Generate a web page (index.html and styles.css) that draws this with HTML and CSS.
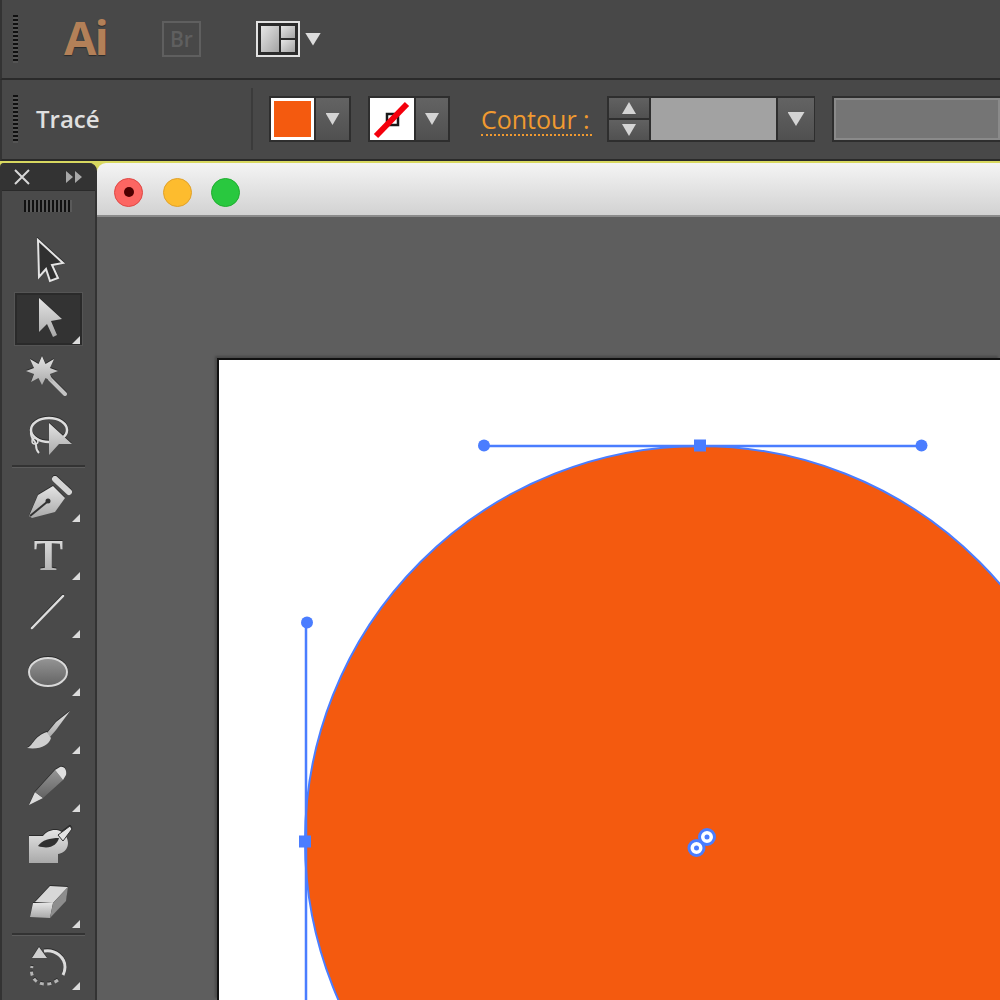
FILE: index.html
```html
<!DOCTYPE html>
<html lang="fr">
<head>
<meta charset="utf-8">
<title>Illustrator</title>
<link rel="stylesheet" href="styles.css">
</head>
<body>
<svg class="defs" width="0" height="0" aria-hidden="true">
  <defs>
    <linearGradient id="lg" x1="0" y1="0" x2="0" y2="1"><stop offset="0" stop-color="#e4e4e4"/><stop offset="1" stop-color="#a9a9a9"/></linearGradient>
    <linearGradient id="gray" x1="0" y1="0" x2="0" y2="1"><stop offset="0" stop-color="#959595"/><stop offset="1" stop-color="#636363"/></linearGradient>
    <linearGradient id="layout" x1="0" y1="0" x2="1" y2="1"><stop offset="0" stop-color="#e6e6e6"/><stop offset="1" stop-color="#a4a4a4"/></linearGradient>
  </defs>
</svg>
<div class="app">
  <header class="appbar">
    <span class="grip"></span>
    <span class="ai">Ai</span>
    <span class="br">Br</span>
    <svg class="layout-icon" width="44" height="36" viewBox="0 0 44 36">
      <rect x="1" y="1" width="42" height="34" fill="#2b2b2b" stroke="#e2e2e2" stroke-width="2"/>
      <rect x="5" y="5" width="18" height="26" fill="url(#layout)"/>
      <rect x="25" y="5" width="14" height="12" fill="url(#layout)"/>
      <rect x="25" y="19" width="14" height="12" fill="url(#layout)"/>
    </svg>
    <span class="tri tri-layout"></span>
  </header>
  <div class="optbar">
    <span class="grip"></span>
    <span class="trace">Tracé</span>
    <span class="vsep"></span>
    <div class="ctl ctl-fill">
      <span class="swatch swatch-orange"></span>
      <span class="btn"><span class="tri"></span></span>
    </div>
    <div class="ctl ctl-stroke">
      <svg class="swatch-none" width="44" height="42" viewBox="0 0 44 42">
        <rect width="44" height="42" fill="#fff"/>
        <rect x="17" y="16" width="11" height="11" fill="none" stroke="#1a1a1a" stroke-width="2.5"/>
        <path d="M6 38 L37 6" stroke="#f4000c" stroke-width="6"/>
      </svg>
      <span class="btn"><span class="tri"></span></span>
    </div>
    <span class="contour">Contour :</span>
    <div class="ctl ctl-weight">
      <div class="stepper">
        <span class="step"><span class="tri tri-up"></span></span>
        <span class="step"><span class="tri"></span></span>
      </div>
      <span class="field"></span>
      <span class="btn btn-wide"><span class="tri tri-big"></span></span>
    </div>
    <span class="field-long"></span>
  </div>
  <div class="stage">
    <aside class="tools">
      <div class="tools-head">
        <svg width="18" height="16" viewBox="0 0 18 16"><path d="M2 1 L16 15 M16 1 L2 15" stroke="#d8d8d8" stroke-width="2"/></svg>
        <svg width="18" height="14" viewBox="0 0 18 14"><path d="M1 1 L8 7 L1 13Z M10 1 L17 7 L10 13Z" fill="#a8a8a8"/></svg>
      </div>
      <div class="tools-grip"></div>

      <div class="tool"><svg class="ico" viewBox="15 235 67 52"><path d="M38 240 L63 263 L52 265 L58 278 L50 281 L46 269 L39 277Z" fill="#303030" stroke="#e4e4e4" stroke-width="2"/></svg></div>
      <div class="tool tool-active corner"><svg class="ico" viewBox="15 293 67 52"><path d="M39 298 L62 319 L51 321 L57 335 L53 337 L47 324 L39 332Z" fill="url(#lg)"/></svg></div>
      <div class="tool"><svg class="ico" viewBox="15 351 67 52">
        <path d="M50 379 L65 394" stroke="#c4c4c4" stroke-width="4" stroke-linecap="round"/>
        <path d="M42 356 L45.500 364 L54 359 L50 368 L58 371 L50 374 L53 382 L45.500 378 L42 385 L38.500 378 L31 382 L34 374 L26 371 L34 368 L30 359 L38.500 364Z" fill="url(#lg)"/>
      </svg></div>
      <div class="tool"><svg class="ico" viewBox="15 409 67 52">
        <ellipse cx="49" cy="430" rx="18" ry="12" fill="none" stroke="#ddd" stroke-width="2.500"/>
        <path d="M31 431 C30 440 36 440 36 445 C36 449 38 452 39 453" fill="none" stroke="#ddd" stroke-width="2"/>
        <circle cx="35" cy="441" r="3" fill="none" stroke="#ddd" stroke-width="1.500"/>
        <path d="M49 423 L72 444 L59 444 L49 455Z" fill="url(#lg)"/>
      </svg></div>
      <div class="tool-sep"></div>
      <div class="tool corner"><svg class="ico" viewBox="15 471 67 52">
        <path d="M55 479 L69 492" stroke="#d5d5d5" stroke-width="6" stroke-linecap="round"/>
        <path d="M29 516 L38 495 L53 486 L65 498 L55 512 L32 518Z" fill="url(#lg)"/>
        <path d="M30 516 L47 502" stroke="#333" stroke-width="2"/><circle cx="48" cy="501" r="2.500" fill="#333"/>
      </svg></div>
      <div class="tool corner"><svg class="ico" viewBox="15 529 67 52"><text class="tool-t" x="48.500" y="570" text-anchor="middle">T</text></svg></div>
      <div class="tool corner"><svg class="ico" viewBox="15 587 67 52"><path d="M63 596 L32 628" stroke="#dedede" stroke-width="2.500" stroke-linecap="round"/></svg></div>
      <div class="tool corner"><svg class="ico" viewBox="15 645 67 52"><ellipse cx="48" cy="672" rx="19" ry="14" fill="url(#gray)" stroke="#d8d8d8" stroke-width="2"/></svg></div>
      <div class="tool corner"><svg class="ico" viewBox="15 703 67 52">
        <path d="M70 711 L56 722 L47 733 L50 737 L56 730Z" fill="url(#lg)"/>
        <path d="M47 732 L51 738 C49 745 40 750 27 748 C33 746 34 736 47 732Z" fill="#cfcfcf"/>
      </svg></div>
      <div class="tool corner"><svg class="ico" viewBox="15 761 67 52">
        <path d="M29 805 L35 792 L43 798Z" fill="#dcdcdc"/>
        <path d="M35 792 L55 770 L63 780 L43 798Z" fill="url(#gray)"/>
        <path d="M55 770 L60 767 C65 766 67 771 66 775 L63 780Z" fill="#dedede"/>
      </svg></div>
      <div class="tool"><svg class="ico" viewBox="15 819 67 52">
        <path d="M29 836 L43 836 C48 829 60 827 66 836 C71 845 66 853 58 854 L58 863 L29 863Z" fill="url(#lg)"/>
        <path d="M38 846 C42 840 50 838 59 838 C57 845 50 850 38 846Z" fill="#2f2f2f"/>
        <path d="M58 835 L70 826 L72 829 L63 841Z" fill="#e2e2e2" stroke="#2f2f2f"/>
      </svg></div>
      <div class="tool corner"><svg class="ico" viewBox="15 877 67 52">
        <path d="M35 902 L50 886 L68 887 L53 903Z" fill="#d8d8d8"/>
        <path d="M33 903 L53 903 L50 918 L30 917Z" fill="url(#lg)"/>
        <path d="M53 903 L68 887 L66 901 L50 918Z" fill="#8d8d8d"/>
      </svg></div>
      <div class="tool-sep"></div>
      <div class="tool corner"><svg class="ico" viewBox="15 939 67 52">
        <path d="M44 951 C56 949 65 958 65 967 C65 971 64 973 63 975" fill="none" stroke="#dcdcdc" stroke-width="3"/>
        <path d="M58 980 C50 986 40 985 35 980 C31 976 31 970 32 966" fill="none" stroke="#b5b5b5" stroke-width="3" stroke-dasharray="4 3.500"/>
        <path d="M39 947 L47 958 L32 958Z" fill="#d0d0d0"/>
      </svg></div>
    </aside>
    <main class="doc">
      <div class="titlebar">
        <span class="light light-red"><span class="light-dot"></span></span>
        <span class="light light-yellow"></span>
        <span class="light light-green"></span>
      </div>
      <div class="canvas">
        <div class="artboard">
          <svg class="art" width="781" height="640" viewBox="219 360 781 640">
            <circle cx="700" cy="841" r="395" fill="#f45a0f" stroke="#4a7dff" stroke-width="2"/>
            <path d="M484 446 H921 M306 622 V1000" stroke="#4a7dff" stroke-width="2.500" fill="none"/>
            <circle cx="484" cy="445.500" r="6" fill="#4a7dff"/>
            <circle cx="921.500" cy="445.500" r="6" fill="#4a7dff"/>
            <circle cx="307" cy="622.500" r="6" fill="#4a7dff"/>
            <rect x="694" y="439.500" width="12" height="12" fill="#4a7dff"/>
            <rect x="299" y="835.500" width="12" height="12" fill="#4a7dff"/>
            <circle cx="707" cy="837" r="7.500" fill="#fff" stroke="#4a7dff" stroke-width="3"/>
            <circle cx="707" cy="837" r="2.500" fill="#4a7dff"/>
            <circle cx="696.500" cy="848" r="7.500" fill="#fff" stroke="#4a7dff" stroke-width="3"/>
            <circle cx="696.500" cy="848" r="2.500" fill="#4a7dff"/>
          </svg>
        </div>
      </div>
    </main>
  </div>
</div>
</body>
</html>
```
FILE: styles.css
```css
* { box-sizing: border-box; }
html, body { margin: 0; padding: 0; background: #484848; }
body { font-family: "Open Sans", "Noto Sans", sans-serif; }
.defs { position: absolute; }
.app { width: 1000px; height: 1000px; overflow: hidden; display: flex; flex-direction: column; }

.grip {
  width: 5px; height: 48px; flex: none;
  background: repeating-linear-gradient(to bottom, #111 0 2px, #555 2px 4px);
}
.appbar {
  height: 80px; flex: none; display: flex; align-items: center;
  padding: 0 0 0 11px; background: #484848;
  border-left: 2px solid #333;
  border-bottom: 2px solid #2a2a2a;
}
.ai {
  margin-left: 46px; width: 45px; font-size: 47px; line-height: 60px; font-weight: 700;
  letter-spacing: -2px;
  color: #b38058; text-shadow: 0 1px 1px #2b2b2b; margin-bottom: 4px; flex: none;
}
.br {
  margin-left: 53px; width: 39px; height: 36px; flex: none;
  display: flex; align-items: center; justify-content: center;
  border: 2px solid #5f5f5f; color: #5f5f5f; font-size: 21px; font-weight: 600;
}
.layout-icon { margin-left: 55px; flex: none; }
.tri {
  display: block; width: 14px; height: 12px; flex: none; background: #d4d4d4;
  clip-path: polygon(0 0, 100% 0, 50% 100%);
}
.tri-up { clip-path: polygon(50% 0, 100% 100%, 0 100%); }
.tri-big { width: 17px; height: 14px; }
.tri-layout { margin-left: 5px; width: 16px; height: 13px; background: #dcdcdc; }

.optbar {
  height: 81px; flex: none; display: flex; align-items: center;
  background: #484848; border-left: 2px solid #333; padding-left: 11px;
  padding-bottom: 1px;
  border-bottom: 2px solid #2a2a2a;
}
.trace { margin-left: 18px; width: 66px; font-size: 24px; font-weight: 600; color: #e0e0e0; line-height: 30px; flex: none; }
.vsep { margin-left: 149px; width: 2px; height: 62px; background: #3b3b3b; flex: none; }
.ctl {
  display: flex; flex: none; height: 46px; padding: 2px; gap: 2px;
  background: #2e2e2e;
}
.ctl-fill { margin-left: 16px; width: 82px; }
.ctl-stroke { margin-left: 17px; width: 82px; }
.ctl-weight { margin-left: 15px; width: 208px; }
.swatch-orange { width: 43px; height: 42px; flex: none; background: #f45a0f; border: 3px solid #fff; }
.swatch-none { flex: none; display: block; }
.btn {
  flex: 1; display: flex; align-items: center; justify-content: center;
  background: linear-gradient(#636363, #505050);
}
.btn-wide { flex: none; width: 36px; }
.contour {
  margin-left: 31px; width: 111px; font-size: 25px; line-height: 30px; color: #f09a30;
  white-space: nowrap; border-bottom: 2px dotted #f09a30; margin-top: 2px; height: 32px;
  flex: none;
}
.stepper { width: 40px; display: flex; flex-direction: column; gap: 2px; flex: none; }
.step {
  flex: 1; display: flex; align-items: center; justify-content: center;
  background: linear-gradient(#616161, #515151);
}
.field { width: 125px; flex: none; background: #a2a2a2; }
.field-long {
  margin-left: 17px; flex: 1; height: 46px; background: #757575;
  border: 2px solid #2e2e2e; border-right: 0; box-shadow: inset 0 0 0 2px #8a8a8a;
}

.stage { flex: 1; display: flex; min-height: 0; background: #d8d860; padding-top: 2px; }
.tools {
  width: 97px; flex: none; background: #4a4a4a;
  border-left: 2px solid #333; border-right: 2px solid #333;
  border-radius: 4px 8px 0 0; overflow: hidden;
  display: flex; flex-direction: column;
}
.tools-head {
  height: 28px; flex: none; display: flex; align-items: center; justify-content: space-between;
  padding: 0 12px 0 11px; background: #333; border-bottom: 1px solid #2a2a2a;
}
.tools-grip {
  width: 48px; height: 12px; flex: none; margin: 9px 0 20px 22px;
  background: repeating-linear-gradient(to right, #111 0 2px, #5a5a5a 2px 4px);
}
.tool {
  position: relative; width: 67px; height: 52px; flex: none; margin: 3px 0 3px 13px;
}
.tool-active {
  background: #333; box-shadow: inset 0 0 0 2px #2a2a2a, 0 0 0 1px #555;
}
.corner::after {
  content: ""; position: absolute; right: 2px; bottom: 1px; width: 8px; height: 8px;
  background: #dcdcdc; clip-path: polygon(100% 0, 100% 100%, 0 100%);
}
.ico { display: block; width: 67px; height: 52px; overflow: visible; filter: drop-shadow(0 -1px 0 #2a2a2a); }
.tool-t { font-family: "Liberation Serif", serif; font-size: 44px; font-weight: 700; fill: url(#lg); }
.tool-sep { height: 2px; flex: none; margin: 1px 10px 1px 10px; background: #333; box-shadow: 0 1px 0 #5c5c5c; }

.doc { flex: 1; min-width: 0; display: flex; flex-direction: column; }
.titlebar {
  height: 54px; flex: none; display: flex; align-items: center; gap: 19.500px;
  padding: 6px 0 0 17px; border-radius: 9px 0 0 0;
  background: linear-gradient(#f4f4f4, #d2d2d2);
  border-bottom: 2px solid #8b8b8b;
}
.light { width: 29px; height: 29px; border-radius: 50%; flex: none; display: flex; align-items: center; justify-content: center; }
.light-red { background: #fc6662; border: 1px solid #df4744; }
.light-dot { width: 10px; height: 10px; border-radius: 50%; background: #4d0000; }
.light-yellow { background: #fdbc2e; border: 1px solid #e0a12a; }
.light-green { background: #29c83f; border: 1px solid #1fae2f; }
.canvas { flex: 1; min-height: 0; background: #5e5e5e; padding: 141px 0 0 120px; }
.artboard { background: #fff; border-top: 2px solid #111; border-left: 2px solid #111; height: 642px; box-shadow: -2px -2px 2px #4a4a4a; }
.art { display: block; overflow: hidden; }
```
